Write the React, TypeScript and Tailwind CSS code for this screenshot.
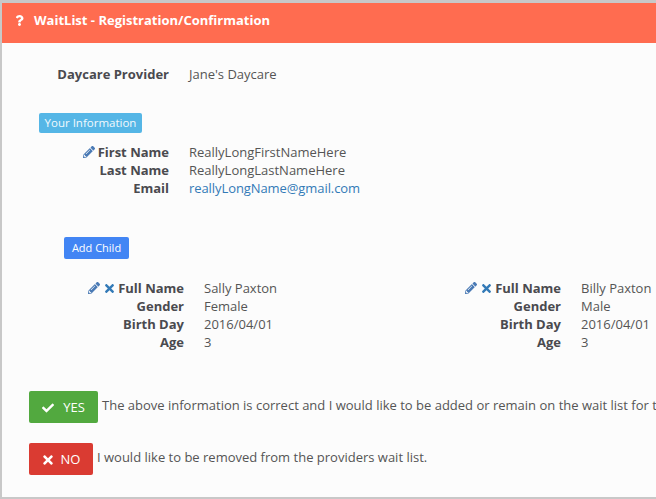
import { FaCheck, FaPencilAlt, FaQuestion, FaTimes } from "react-icons/fa";

interface Child {
  name: string;
  gender: string;
  birthDay: string;
  age: number;
}

const CHILDREN: Child[] = [
  { name: "Sally Paxton", gender: "Female", birthDay: "2016/04/01", age: 3 },
  { name: "Billy Paxton", gender: "Male", birthDay: "2016/04/01", age: 3 },
];

function InfoRow({
  label,
  value,
  width,
  icons,
  link,
}: {
  label: string;
  value: string;
  width: string;
  icons?: React.ReactNode;
  link?: boolean;
}) {
  return (
    <div className="flex h-[18px] items-center leading-[18px]">
      <div className={`flex shrink-0 items-center justify-end gap-[3px] font-bold text-[#4a4a4f] ${width}`}>
        {icons}
        <span>{label}</span>
      </div>
      <div className={`ml-5 whitespace-nowrap ${link ? "text-[#337ab7] tracking-[-0.08px]" : "text-[#555]"}`}>
        {value}
      </div>
    </div>
  );
}

export default function App() {
  return (
    <div className="h-[499px] w-[656px] overflow-hidden bg-[#c8c8c8] pl-[2px] pt-[3px] pb-[2px] font-['Open_Sans',sans-serif] text-[13px]">
      <div className="flex h-[494px] w-[654px] flex-col overflow-hidden bg-[#fcfcfc]">
        <div className="flex h-10 shrink-0 items-center bg-[#ff6c50] pb-1 pl-[12px] font-bold text-white">
          <FaQuestion className="h-[11px] w-[11px] -translate-y-[1px]" />
          <span className="ml-[9px]">WaitList - Registration/Confirmation</span>
        </div>

        <div className="pt-[22px]">
          <InfoRow label="Daycare Provider" value="Jane's Daycare" width="w-[167px]" />
        </div>

        <div className="mt-[30px] pl-[37px]">
          <span className="flex h-5 w-[103px] items-center justify-center whitespace-nowrap rounded-[2px] bg-[#55b6e6] text-[11.5px] text-[#f2f9fd]">
            Your Information
          </span>
        </div>

        <div className="mt-[10px]">
          <InfoRow
            label="First Name"
            value="ReallyLongFirstNameHere"
            width="w-[167px]"
            icons={<FaPencilAlt className="h-3 w-3 text-[#4a7ab5]" />}
          />
          <InfoRow label="Last Name" value="ReallyLongLastNameHere" width="w-[167px]" />
          <InfoRow label="Email" value="reallyLongName@gmail.com" width="w-[167px]" link />
        </div>

        <div className="mt-[40px] pl-[62px]">
          <span className="flex h-[22px] w-[65px] items-center justify-center whitespace-nowrap rounded-[2px] bg-[#4285f4] text-[11px] text-white">
            Add Child
          </span>
        </div>

        <div className="mt-5 flex">
          {CHILDREN.map((child) => (
            <div key={child.name} className="w-[377px] shrink-0">
              <InfoRow
                label="Full Name"
                value={child.name}
                width="w-[182px]"
                icons={
                  <>
                    <FaPencilAlt className="h-3 w-3 text-[#4a7ab5]" />
                    <FaTimes className="ml-[1px] h-[13px] w-[11px] text-[#337ab7]" />
                  </>
                }
              />
              <InfoRow label="Gender" value={child.gender} width="w-[182px]" />
              <InfoRow label="Birth Day" value={child.birthDay} width="w-[182px]" />
              <InfoRow label="Age" value={String(child.age)} width="w-[182px]" />
            </div>
          ))}
        </div>

        <div className="mt-10 flex items-start pl-[27px] text-[#555]">
          <div className="flex h-8 w-[69px] shrink-0 items-center justify-center gap-[9px] rounded-[2px] bg-[#52a93f] pt-[1px] text-white">
            <FaCheck className="h-3 w-3" />
            <span>YES</span>
          </div>
          <span className="ml-1 whitespace-nowrap leading-[28px]">
            The above information is correct and I would like to be added or remain on the wait list for this provider.
          </span>
        </div>

        <div className="mt-5 flex items-start pl-[27px] text-[#555]">
          <div className="flex h-8 w-[64px] shrink-0 items-center justify-center gap-[7px] rounded-[2px] bg-[#da3b32] pt-[1px] text-white">
            <FaTimes className="h-[14px] w-[12px]" />
            <span>NO</span>
          </div>
          <span className="ml-1 whitespace-nowrap leading-[28px]">
            I would like to be removed from the providers wait list.
          </span>
        </div>
      </div>
    </div>
  );
}
